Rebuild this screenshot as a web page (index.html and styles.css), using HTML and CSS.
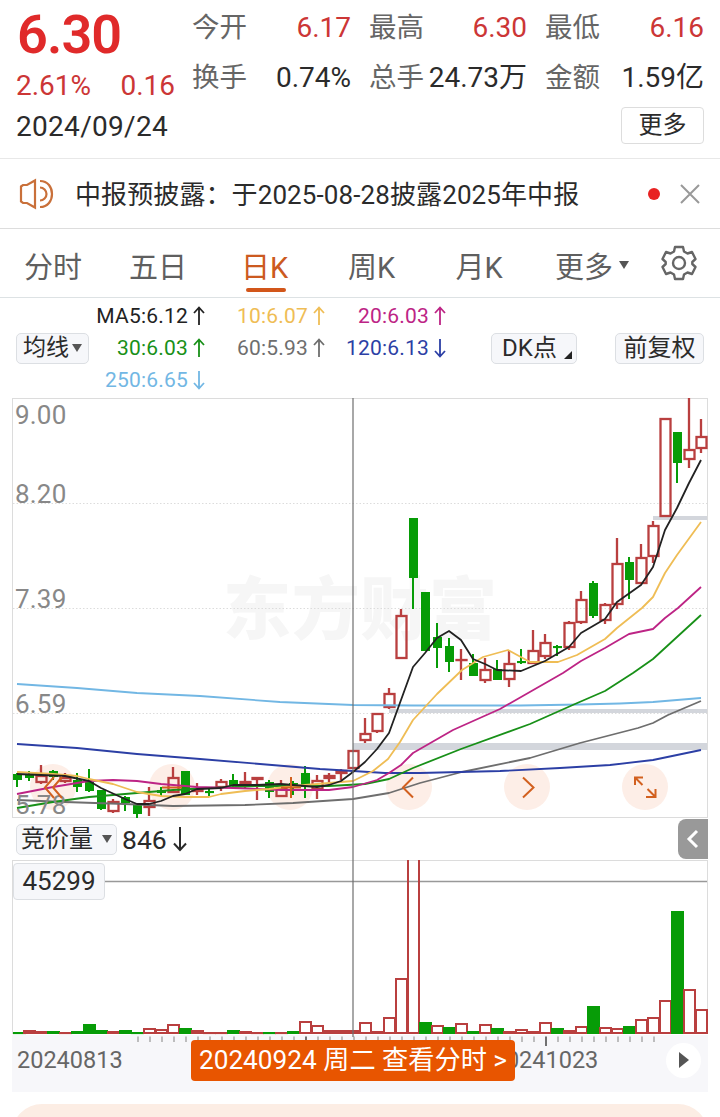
FILE: index.html
```
<!DOCTYPE html>
<html lang="zh-CN">
<head>
    <meta charset="UTF-8">
    <title>日K</title>
    <link rel="stylesheet" href="styles.css">
</head>
<body>
<div class="quote">
    <div class="now">
        <div class="price">6.30</div>
        <div class="change"><span>2.61%</span><span>0.16</span></div>
        <div class="date">2024/09/24</div>
    </div>
    <div class="detail">
        <ul>
            <li><label>今开</label><b class="red">6.17</b></li>
            <li><label>最高</label><b class="red">6.30</b></li>
            <li><label>最低</label><b class="red">6.16</b></li>
            <li><label>换手</label><b>0.74%</b></li>
            <li><label>总手</label><b>24.73万</b></li>
            <li><label>金额</label><b>1.59亿</b></li>
        </ul>
        <div class="more">更多</div>
    </div>
</div>

<div class="news">
    <svg class="horn" width="36" height="32" viewBox="0 0 36 32">
        <path d="M3 8.500 L5 7 H9 L17 2.500 V29.500 L9 25 H5 L3 23.500 Z"/>
        <path d="M22 9.500 A6.500 6.500 0 0 1 22 22.500"/>
        <path d="M22 3 C38 3 38 29 22 29"/>
    </svg>
    <p>中报预披露：于2025-08-28披露2025年中报</p>
    <i class="dot"></i>
    <svg class="close" width="20" height="20" viewBox="0 0 20 20"><path d="M1 1 L19 19 M19 1 L1 19"/></svg>
</div>

<ul class="tabs">
    <li>分时</li>
    <li>五日</li>
    <li class="current">日K</li>
    <li>周K</li>
    <li>月K</li>
    <li>更多<i class="down"></i></li>
    <li class="set">
        <svg width="36" height="36" viewBox="0 0 36 36">
            <path d="M14 2 H22 L23 6.500 L26.500 8.500 L31 7 L34.500 14 L31.300 17 V19 L34.500 22 L31 29 L26.500 27.500 L23 29.500 L22 34 H14 L13 29.500 L9.500 27.500 L5 29 L1.500 22 L4.700 19 V17 L1.500 14 L5 7 L9.500 8.500 L13 6.500 Z"/>
            <circle cx="18" cy="18" r="6"/>
        </svg>
    </li>
</ul>

<div class="legend">
    <div class="btn ma">均线<i class="down"></i></div>
    <ul>
        <li class="c5">MA5:6.12<svg width="12" height="20"><path d="M6 19 V1.500 M1 7 L6 1.500 L11 7"/></svg></li>
        <li class="c10">10:6.07<svg width="12" height="20"><path d="M6 19 V1.500 M1 7 L6 1.500 L11 7"/></svg></li>
        <li class="c20">20:6.03<svg width="12" height="20"><path d="M6 19 V1.500 M1 7 L6 1.500 L11 7"/></svg></li>
        <li class="c30">30:6.03<svg width="12" height="20"><path d="M6 19 V1.500 M1 7 L6 1.500 L11 7"/></svg></li>
        <li class="c60">60:5.93<svg width="12" height="20"><path d="M6 19 V1.500 M1 7 L6 1.500 L11 7"/></svg></li>
        <li class="c120">120:6.13<svg width="12" height="20"><path d="M6 1 V18.500 M1 13 L6 18.500 L11 13"/></svg></li>
        <li class="c250">250:6.65<svg width="12" height="20"><path d="M6 1 V18.500 M1 13 L6 18.500 L11 13"/></svg></li>
    </ul>
    <div class="btn dk">DK点<i class="corner"></i></div>
    <div class="btn fq">前复权</div>
</div>

<div class="chart">
    <svg class="kline" width="720" height="420" viewBox="0 398 720 420">
        <text class="mark" x="223" y="634" textLength="274">东方财富</text>
        <g class="grid">
            <path d="M13 503.500 H707 M13 608.500 H707 M13 713.500 H707"/>
        </g>
        <g class="gap">
            <rect x="653" y="516" width="54" height="4"/>
            <rect x="389" y="709" width="318" height="4"/>
            <rect x="353" y="743" width="354" height="7"/>
        </g>
        <rect class="frame" x="12.500" y="398.500" width="695" height="419"/>
        <g id="rounds"></g>
        <g id="candles"></g>
        <g id="lines"></g>
        <g class="scale">
            <text x="15" y="424">9.00</text>
            <text x="15" y="503">8.20</text>
            <text x="15" y="608">7.39</text>
            <text x="15" y="713">6.59</text>
            <text x="15" y="814">5.78</text>
        </g>
        <g class="tools">
            <path d="M54 777 L45 787.500 L54 798 M62 777 L53 787.500 L62 798"/>
            <path d="M162 787.500 H182"/>
            <path d="M281 787.500 H301 M291 777 V798"/>
            <path d="M413 777.500 L403 787.500 L413 797.500"/>
            <path d="M523 777.500 L533.500 787.500 L523 797.500"/>
            <path d="M635 785 V777.500 H643 M635 777.500 L642.500 785 M655.500 789 V797 H646 M655.500 797 L647.500 789"/>
        </g>
    </svg>
    <div class="sub">
        <div class="btn">竞价量<i class="down"></i></div>
        <span>846</span>
        <svg class="arrow" width="14" height="26"><path d="M7 1 V24 M1 17.500 L7 24 L13 17.500"/></svg>
        <div class="fold"><svg width="14" height="20"><path d="M11 2 L3 10 L11 18"/></svg></div>
    </div>
    <svg class="volume" width="720" height="175" viewBox="0 860 720 175">
        <rect class="frame" x="12.500" y="860.500" width="695" height="173"/>
        <path class="level" d="M104 881.500 H707"/>
        <g id="bars"></g>
    </svg>
    <div class="max">45299</div>
    <div class="axis">
        <svg id="ticks" width="696" height="12" viewBox="12 1035 696 12"></svg>
        <span class="from">20240813</span>
        <span class="to">20241023</span>
        <span class="play"><i></i></span>
        <div class="tip">20240924 周二 查看分时 &gt;</div>
    </div>
    <div class="cross"></div>
</div>
<div class="bottom"></div>

<script src="chart.js"></script>
</body>
</html>
```
FILE: styles.css
```
* {
    padding: 0;
    margin: 0;
    list-style: none;
    box-sizing: border-box;
}

body {
    width: 720px;
    height: 1117px;
    overflow: hidden;
    background: #fff;
    color: #2b2b2b;
    font-family: Roboto, "Noto Sans CJK SC", sans-serif;
}

b, i {
    font-weight: normal;
    font-style: normal;
}

svg {
    display: block;
    fill: none;
}

/* 报价 */
.quote {
    display: flex;
    height: 159px;
    padding: 0 16px;
    border-bottom: 1px solid #e8e8e8;
}

.now {
    width: 176px;
}

.price {
    height: 68px;
    padding-left: 1px;
    line-height: 70px;
    font-size: 54px;
    font-weight: 600;
    letter-spacing: -0.9px;
    color: #e02a2a;
}

.change {
    display: flex;
    justify-content: space-between;
    width: 159px;
    height: 34px;
    line-height: 35px;
    font-size: 28px;
    color: #cc3636;
}

.date {
    line-height: 50px;
    font-size: 28px;
    letter-spacing: 0.3px;
}

.detail {
    width: 512px;
}

.detail ul {
    display: grid;
    grid-template-columns: 159px 158px 159px;
    column-gap: 18px;
    grid-template-rows: 50px 50px;
    height: 104px;
    padding-top: 3px;
}

.detail li {
    display: flex;
    justify-content: space-between;
    line-height: 50px;
    font-size: 28px;
    white-space: nowrap;
}

.detail label {
    font-size: 27.5px;
    color: #666;
}

.detail .red {
    color: #cc3636;
}

.more {
    width: 83px;
    height: 37px;
    margin: 3px 0 0 auto;
    border: 1px solid #ddd;
    border-radius: 4px;
    line-height: 35px;
    text-align: center;
    font-size: 24px;
}

/* 公告 */
.news {
    display: flex;
    align-items: center;
    height: 70px;
    padding: 0 20px 0 18px;
    border-bottom: 1px solid #ddd;
}

.news p {
    flex: 1;
    padding: 0 0 3px 21px;
    font-size: 26px;
    letter-spacing: 0.1px;
}

.horn {
    stroke: #c9703a;
    stroke-width: 2.2;
}

.dot {
    width: 12px;
    height: 12px;
    margin-right: 20px;
    border-radius: 50%;
    background: #e82222;
}

.close {
    stroke: #999;
    stroke-width: 2;
}

/* 周期 */
.tabs {
    display: grid;
    grid-template-columns: 106px 104px 109px 105px 110px 116px 58px;
    height: 69px;
    border-bottom: 1px solid #dde2e4;
    font-size: 29px;
    color: #5f5f5f;
}

.tabs li {
    display: flex;
    justify-content: center;
    align-items: center;
    padding-top: 3px;
}

.tabs .current {
    color: #cc5a20;
    position: relative;
}

.tabs .current:after {
    content: "";
    position: absolute;
    left: 36px;
    bottom: 5px;
    width: 40px;
    height: 4px;
    border-radius: 2px;
    background: #d2561a;
}

.down {
    border: 5px solid transparent;
    border-top: 8px solid #555;
    border-bottom: 0;
    margin-left: 6px;
}

.tabs .set {
    padding: 0;
}

.set svg {
    stroke: #666;
    stroke-width: 2.4;
    stroke-linejoin: round;
}

/* 均线 */
.legend {
    display: flex;
    align-items: center;
    height: 100px;
    padding: 0 16px;
}

.btn {
    display: flex;
    align-items: center;
    justify-content: center;
    height: 31px;
    border: 1px solid #dcdfe3;
    border-radius: 5px;
    background: #f6f7fa;
    line-height: 30px;
    font-size: 24px;
    white-space: nowrap;
}

.ma {
    width: 73px;
    font-size: 23px;
}

.ma .down {
    margin-left: 3px;
}

.legend ul {
    display: grid;
    grid-template-columns: 116px 120px 121px;
    grid-auto-rows: 32px;
    width: 357px;
}

.legend li {
    display: flex;
    justify-content: flex-end;
    align-items: center;
    font-size: 21px;
    letter-spacing: 0.2px;
    white-space: nowrap;
}

.legend li svg {
    margin-left: 5px;
    stroke: currentColor;
    stroke-width: 1.8;
}

.c5 { color: #222; }
.c10 { color: #efbd55; }
.c20 { color: #bd2485; }
.c30 { color: #189018; }
.c60 { color: #6e6e6e; }
.c120 { color: #2c3fa5; }
.c250 { color: #72b7e4; }

.dk {
    width: 86px;
    margin-left: 45px;
    padding-left: 6px;
}

.corner {
    align-self: flex-end;
    margin: 0 0 4px 7px;
    border-left: 8px solid transparent;
    border-bottom: 8px solid #222;
}

.fq {
    width: 89px;
    margin-left: auto;
}

/* K线 */
.chart {
    position: relative;
}

.frame {
    stroke: #dcdcdc;
}

.grid path {
    stroke: #dcdcdc;
    stroke-dasharray: 1.5 2;
}

.gap rect {
    fill: #d3d6dc;
}

.mark {
    fill: #f6f6f6;
    font-size: 68px;
    font-weight: 900;
}

.scale text {
    fill: #888;
    font-size: 26px;
    letter-spacing: 0.2px;
}

#rounds circle {
    fill: #fdeee7;
}

#candles, #bars {
    stroke-width: 2;
}

#candles .up {
    stroke-width: 2.3;
}

.up {
    stroke: #b93f3f;
}

.fall {
    stroke: #079c07;
    fill: #079c07;
}

#lines polyline {
    stroke: currentColor;
    stroke-width: 1.8;
    stroke-linejoin: round;
}

.tools path {
    stroke: #d2601f;
    stroke-width: 2;
}

.sub {
    display: flex;
    align-items: center;
    height: 42px;
    padding-left: 16px;
}

.sub .btn {
    width: 101px;
}

.sub .down {
    margin-left: 9px;
}

.sub span {
    margin-left: 5px;
    font-size: 26.5px;
}

.arrow {
    margin-left: 6px;
    stroke: #2b2b2b;
    stroke-width: 2;
}

.fold {
    display: flex;
    align-items: center;
    justify-content: center;
    width: 30px;
    height: 40px;
    margin: 0 12px 0 auto;
    border-radius: 8px 0 0 8px;
    background: #999;
}

.fold path {
    stroke: #fff;
    stroke-width: 3;
}

.level {
    stroke: #999;
    stroke-width: 1.5;
}

.max {
    position: absolute;
    left: 13px;
    top: 465px;
    width: 92px;
    height: 37px;
    border: 1px solid #dcdfe3;
    border-radius: 4px;
    background: #f6f7fa;
    line-height: 35px;
    text-align: center;
    font-size: 26px;
}

.axis {
    position: relative;
    display: flex;
    align-items: center;
    height: 57px;
    margin: 0 12px;
    padding: 0 7px 7px 5px;
    background: #f7f7fa;
    font-size: 23.5px;
    color: #666;
}

#ticks {
    position: absolute;
    left: 0;
    top: 0;
    stroke: #aaa;
    stroke-width: 1.5;
}

#ticks .month {
    stroke: #444;
}

.to {
    margin-left: 370px;
}

.play {
    display: flex;
    align-items: center;
    justify-content: center;
    width: 35px;
    height: 35px;
    margin-left: auto;
    border-radius: 50%;
    background: #fff;
}

.play i {
    border: 8px solid transparent;
    border-left: 10px solid #555;
    border-right: 0;
}

.tip {
    position: absolute;
    left: 179px;
    top: 5px;
    width: 324px;
    height: 41px;
    border-radius: 4px;
    background: #e85500;
    line-height: 41px;
    text-align: center;
    font-size: 26.2px;
    color: #fff;
    white-space: nowrap;
    z-index: 2;
}

.cross {
    position: absolute;
    left: 352px;
    top: 0;
    width: 2px;
    height: 639px;
    background: rgba(110, 110, 110, 0.6);
}

.bottom {
    height: 60px;
    margin: 12px 12px 0;
    border-radius: 34px;
    background: #fcede4;
}
```
FILE: chart.js
```
var NS = "http://www.w3.org/2000/svg";

//创建svg元素并加入到父元素中
function add(parent, tag, attrs) {
    var el = document.createElementNS(NS, tag);
    for (var k in attrs) {
        el.setAttribute(k, attrs[k]);
    }
    parent.appendChild(el);
}

function byId(id) {
    return document.getElementById(id);
}

//每根K线: 涨跌(1涨 0跌), 最高, 实体上, 实体下, 最低
var days = [
    [0, 773, 774, 780, 787], [0, 771, 775, 778, 781], [1, 765, 775, 783, 784], [0, 770, 771, 777, 780],
    [1, 773, 777, 782, 783], [0, 773, 780, 787, 792], [0, 769, 782, 791, 792], [0, 790, 790, 809, 810],
    [1, 799, 801, 812, 813], [0, 796, 797, 803, 811], [0, 803, 805, 814, 818], [1, 787, 800, 808, 816],
    [0, 787, 790, 793, 796], [1, 767, 777, 793, 793], [0, 771, 771, 795, 795], [1, 783, 789, 792, 795],
    [0, 788, 791, 793, 796], [1, 779, 781, 788, 791], [0, 774, 780, 785, 787], [1, 772, 781, 785, 788],
    [1, 777, 777, 780, 800], [0, 780, 782, 792, 798], [1, 780, 788, 797, 797], [0, 781, 783, 788, 795],
    [0, 766, 773, 786, 798], [1, 775, 780, 790, 799], [1, 773, 775, 779, 782], [1, 769, 770, 774, 780],
    [1, 750, 750, 769, 769], [1, 718, 733, 741, 743], [1, 713, 713, 732, 733], [1, 688, 693, 708, 709],
    [1, 609, 615, 659, 659], [0, 518, 518, 578, 609], [0, 592, 592, 651, 651], [0, 623, 637, 648, 668],
    [0, 638, 646, 662, 672], [1, 649, 659, 661, 680], [0, 654, 663, 676, 676], [1, 658, 669, 681, 683],
    [0, 660, 669, 680, 680], [1, 651, 663, 680, 687], [0, 649, 661, 663, 664], [1, 630, 650, 664, 664],
    [1, 634, 642, 657, 659], [0, 645, 646, 648, 656], [1, 621, 622, 648, 650], [1, 591, 599, 623, 624],
    [0, 581, 583, 616, 618], [1, 603, 604, 621, 624], [1, 538, 563, 605, 609], [0, 557, 562, 580, 599],
    [1, 544, 557, 584, 584], [1, 521, 525, 557, 563], [1, 418, 418, 517, 517], [0, 432, 432, 463, 483],
    [1, 398, 449, 460, 468], [1, 419, 436, 449, 453]
];

//竞价量: 涨跌, 柱顶
var vols = [
    [0, 1032], [1, 1030], [1, 1031], [0, 1031], [1, 1032], [0, 1031], [0, 1024], [0, 1030], [1, 1031], [0, 1030],
    [0, 1032], [1, 1028], [1, 1029], [1, 1024], [0, 1028], [1, 1030], [1, 1032], [1, 1032], [0, 1030], [1, 1031],
    [1, 1032], [0, 1032], [1, 1032], [0, 1031], [1, 1021], [1, 1025], [1, 1030], [1, 1030], [1, 1030], [1, 1022],
    [1, 1031], [1, 1017], [1, 978], [1, 850], [0, 1022], [1, 1025], [0, 1027], [1, 1023], [0, 1031], [1, 1024],
    [0, 1028], [1, 1031], [1, 1029], [1, 1031], [1, 1022], [0, 1028], [1, 1030], [1, 1026], [0, 1006], [1, 1027],
    [1, 1028], [0, 1026], [1, 1019], [1, 1017], [1, 1000], [0, 911], [1, 989], [1, 1009]
];

var mas = {
    c250: "17,684 77,688 137,693 200,696 280,702 353,705 413,705.5 520,705.5 580,704.5 620,703.5 653,702 701,698",
    c60: "17,800 65,802 125,804 173,806 245,805 293,803 353,799 389,793 420,783 462,772 530,758 580,743 638,728 653,723 668,715 701,701",
    c120: "17,744 77,748 137,754 200,759 260,764 320,769 353,771 385,773 420,773 500,771 560,768 610,765 653,760 701,750",
    c30: "17,808 53,802 89,797 113,795 149,792 173,790 209,788 257,786 329,786 365,784 389,779 413,768 461,749 530,724 575,704 605,691 633,673 653,659 665,648 701,615",
    c20: "17,794 53,787 89,781 113,780 137,781 161,784 197,787 233,788 281,790 329,790 353,787 377,780 389,773 401,765 413,753 453,730 500,709 563,673 581,661 605,648 617,641 629,634 653,629 665,618 678,608 701,587",
    c10: "17,772 53,774 77,776 89,779 113,784 137,792 161,796 185,797 209,797 221,794 245,791 269,789 293,786 329,783 353,781 373,771 388,759 400,742 413,720 437,694 462,670 483,657 508,650 530,662 558,662 577,655 605,639 617,628 642,608 653,597 665,573 677,555 701,522",
    c5: "17,774 65,776 89,781 101,788 125,799 137,804 149,804 161,801 173,796 185,794 197,789 221,788 233,785 257,785 281,784 317,787 329,785 341,781 353,772 365,762 377,749 389,733 401,700 413,667 425,653 437,638 449,631 461,640 473,659 485,664 497,670 521,671 545,661 569,647 581,633 605,619 617,602 641,585 653,567 665,530 677,508 689,483 701,460"
};

[53, 172, 290, 409, 527, 645].forEach(function (x) {
    add(byId("rounds"), "circle", {cx: x, cy: 787, r: 23});
});

days.forEach(function (d, i) {
    var x = 17 + i * 12;
    //阳线和阴线的中线差半个像素
    var cx = d[0] ? x : x + 0.5;
    var g = byId("candles");
    var cls = d[0] ? "up" : "fall";
    add(g, "path", {"class": cls, d: "M" + x + " " + d[1] + "V" + d[2] + "M" + x + " " + d[3] + "V" + d[4]});
    add(g, "rect", {
        "class": cls,
        x: cx - (d[0] ? 4.5 : 3.5),
        y: d[2] + 1,
        width: d[0] ? 10 : 7,
        height: Math.max(d[3] - d[2] - 2, 0.1)
    });
});

for (var key in mas) {
    add(byId("lines"), "polyline", {"class": key, points: mas[key]});
}

vols.forEach(function (v, i) {
    //第一根和最后一根不超出边框
    var left = i == 0 ? 14 : 12 + i * 12;
    add(byId("bars"), "rect", {
        "class": v[0] ? "up" : "fall",
        x: left,
        y: v[1] + 1,
        width: Math.min(11, 707 - left),
        height: Math.max(1033 - v[1] - 1, 0.1)
    });
});

for (var x = 138; x <= 654; x += 12) {
    var month = x == 306 || x == 546;
    add(byId("ticks"), "path", {"class": month ? "month" : "day", d: "M" + x + " 1036.500V" + (x == 546 ? 1046 : 1042)});
}
```
